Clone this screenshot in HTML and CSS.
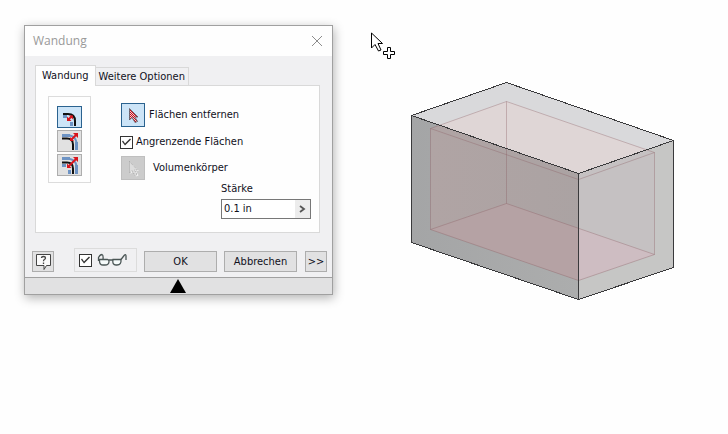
FILE: index.html
```html
<!DOCTYPE html>
<html lang="de">
<head>
<meta charset="utf-8">
<meta name="viewport" content="width=device-width, initial-scale=1">
<title>Wandung</title>
<link rel="stylesheet" href="styles.css">
</head>
<body>
<main class="workspace">
  <section class="dialog" role="dialog" aria-labelledby="dialog-title">
    <header class="titlebar">
      <h1 class="title" id="dialog-title">Wandung</h1>
      <button class="close" type="button" aria-label="Schließen">
        <svg width="12" height="12" viewBox="0 0 12 12"><path d="M1 1l10 10M11 1L1 11" stroke="#8c8c8c" fill="none"/></svg>
      </button>
    </header>
    <form class="body">
      <div class="tabs" role="tablist">
        <button class="tab tab-active" type="button" role="tab" aria-selected="true">Wandung</button>
        <button class="tab" type="button" role="tab" aria-selected="false">Weitere Optionen</button>
      </div>
      <div class="panel" role="tabpanel">
        <div class="modes">
          <button class="mode mode-active" type="button" aria-label="Innen">
            <svg width="23" height="20" viewBox="0 0 23 20" fill="none">
              <path d="M5 9.500h4M13.500 15v4" stroke="#6d93c4" stroke-width="3"/>
              <path d="M5 7h5q7 0 7 7v5" stroke="#111" stroke-width="2"/>
              <path d="M9 14v-4.500l4.500 4.500zM15 8.500v4l-4-4z" fill="#d8141c"/>
              <path d="M10 13l4-4" stroke="#d8141c" stroke-width="2"/>
            </svg>
          </button>
          <button class="mode" type="button" aria-label="Außen">
            <svg width="23" height="20" viewBox="0 0 23 20" fill="none">
              <path d="M4 4.500h8M18.500 11v8" stroke="#6d93c4" stroke-width="3"/>
              <path d="M12 4.500q5.500 1 6.500 7" stroke="#6d93c4" stroke-width="2"/>
              <path d="M4 7.500h5q6 0 6 6v5.500" stroke="#111" stroke-width="2"/>
              <path d="M13 9l5-5" stroke="#d8141c" stroke-width="2"/>
              <path d="M15 2h5v5zM12 6v4h4z" fill="#d8141c"/>
            </svg>
          </button>
          <button class="mode" type="button" aria-label="Beidseitig">
            <svg width="23" height="20" viewBox="0 0 23 20" fill="none">
              <path d="M4 3.500h8M18.500 10v9M4 10.500h4M11.500 15v4" stroke="#6d93c4" stroke-width="3"/>
              <path d="M12 4q5.500 1 6.500 7" stroke="#6d93c4" stroke-width="2"/>
              <path d="M4 7.500h5q6 0 6 6v5.500" stroke="#111" stroke-width="2"/>
              <path d="M11 11l7-7" stroke="#d8141c" stroke-width="2"/>
              <path d="M15 2h5v5zM9 8.500v4.500h4.500z" fill="#d8141c"/>
            </svg>
          </button>
        </div>
        <div class="fields">
          <div class="row">
            <button class="pick pick-active" id="faces" type="button">
              <svg width="22" height="22" viewBox="0 0 22 22">
                <defs><pattern id="dots" width="2" height="2" patternUnits="userSpaceOnUse"><rect width="2" height="2" fill="#f3c9cb"/><path d="M0 0h1v1H0zM1 1h1v1H1z" fill="#c40c18"/></pattern></defs>
                <path d="M7.500 4.500v11.500l2.500-2.500 3 5 2.500-1-2.500-4.500h3z" fill="url(#dots)" stroke="#55555f" stroke-width=".8"/>
              </svg>
            </button>
            <label for="faces">Flächen entfernen</label>
          </div>
          <div class="row row-check">
            <input class="check" id="adjacent" type="checkbox" checked>
            <label for="adjacent">Angrenzende Flächen</label>
          </div>
          <div class="row row-solid">
            <button class="pick pick-disabled" id="solid" type="button" disabled>
              <svg width="22" height="22" viewBox="0 0 22 22">
                <path d="M8.500 5.500v11.500l2.500-2.500 3 5 2.500-1-2.500-4.500h3z" fill="#f2f2f2"/>
                <path d="M7.500 4.500v11.500l2.500-2.500 3 5 2-1-2.500-4.500h3z" fill="#ddd" stroke="#999" stroke-width=".8" stroke-dasharray="1 1"/>
              </svg>
            </button>
            <label for="solid">Volumenkörper</label>
          </div>
          <div class="thickness">
            <label for="thickness">Stärke</label>
            <div class="combo">
              <input class="value" id="thickness" type="text" value="0.1 in">
              <button class="more" type="button" aria-label="Werte">
                <svg width="7" height="8" viewBox="0 0 7 8"><path d="M1 1l4 3-4 3" fill="none" stroke="#555" stroke-width="1.800"/></svg>
              </button>
            </div>
          </div>
        </div>
      </div>
      <div class="actions">
        <button class="btn btn-small" type="button" aria-label="Hilfe">
          <svg width="18" height="18" viewBox="0 0 18 18" fill="none" stroke="#444">
            <path d="M2.500 1.500h14v11h-4l-2.500 4v-4h-7.500z" fill="#fafafa"/>
            <path d="M7.500 5q0-1.500 2-1.500t2 1.500q0 1-1.200 1.500-.8.500-.8 1.700M9.500 9.500v1.500" stroke-width="1.300"/>
          </svg>
        </button>
        <div class="preview">
          <input class="check" id="preview" type="checkbox" checked aria-label="Vorschau">
          <label for="preview">
            <svg width="30" height="14" viewBox="0 0 30 14" fill="none" stroke="#4a5555" stroke-width="1.300">
              <path d="M2.500 6.500h8q1.500 0 1.500 2 0 3.500-4 3.500H6q-3.500 0-3.500-4zM16 6.500h8q.5 5.500-4 5.500h-1q-4 0-3-5.500z" fill="#f6fbfb"/>
              <path d="M12 7h4M1.500 8V4.500Q3 1.500 5 1.500q1.500.5 1 5M24 6.500l3.500-4.500q1.500-1 1.500 1v4"/>
            </svg>
          </label>
        </div>
        <button class="btn btn-wide" type="submit">OK</button>
        <button class="btn btn-wide" type="button">Abbrechen</button>
        <button class="btn btn-small btn-expand" type="button">&gt;&gt;</button>
      </div>
    </form>
    <button class="fold" type="button" aria-label="Einklappen">
      <svg width="16" height="14" viewBox="0 0 16 14"><path d="M8 0l8 14H0z" fill="#000"/></svg>
    </button>
  </section>
  <svg class="scene" viewBox="333 0 395 434" preserveAspectRatio="xMinYMin meet" role="img" aria-label="Quader mit Wandung">
    <defs>
      <clipPath id="top"><path id="top-face" d="M411.500 115.500L506.500 82.500 673.500 140.500 578.500 173.500z"/></clipPath>
      <clipPath id="left"><path id="left-face" d="M411.500 115.500L578.500 173.500V299.500L411.500 242.500z"/></clipPath>
      <clipPath id="right"><path id="right-face" d="M578.500 173.500L673.500 140.500V267.500L578.500 299.500z"/></clipPath>
      <path id="hollow" d="M430.500 128.500L506.500 101.500 654.500 152.500V254.500L578.500 280.500 430.500 229.500z"/>
      <path id="floor" d="M430.500 229.500L506.500 203.500 654.500 254.500 578.500 280.500z"/>
      <linearGradient id="left-shade"><stop offset="0" stop-color="#a4a5a6"/><stop offset="1" stop-color="#acadad"/></linearGradient>
      <linearGradient id="wall-shade"><stop offset="0" stop-color="#b0a4a4"/><stop offset="1" stop-color="#a8a2a2"/></linearGradient>
    </defs>
    <use href="#top-face" fill="#d9d9db"/>
    <use href="#left-face" fill="url(#left-shade)"/>
    <use href="#right-face" fill="#c6c6c5"/>
    <g clip-path="url(#top)"><use href="#hollow" fill="#dfd6d6"/></g>
    <g clip-path="url(#left)"><use href="#hollow" fill="url(#wall-shade)"/><use href="#floor" fill="#b5a2a4"/></g>
    <g clip-path="url(#right)"><use href="#hollow" fill="#c5c1c2"/><use href="#floor" fill="#cebdc2"/></g>
    <path d="M430.500 128.500L506.500 101.500 654.500 152.500 578.500 179.500zM430.500 128.500V229.500M654.500 152.500V254.500M506.500 101.500V203.500M430.500 229.500L506.500 203.500 654.500 254.500 578.500 280.500z" fill="none" stroke="#8a5d62" stroke-opacity=".35"/>
    <path d="M411.500 115.500L506.500 82.500 673.500 140.500V267.500L578.500 299.500 411.500 242.500zL578.500 173.500 673.500 140.500M578.500 173.500V299.500" fill="none" stroke="#3a3a3c" shape-rendering="crispEdges"/>
    <path d="M371.500 33v15l3.500-3.500 3.500 6.500 2.500-1-3-6.500h4.500z" fill="#fff" stroke="#000"/>
    <path d="M387.500 47.500h3v4h4v3h-4v4h-3v-4h-4v-3h4z" fill="#fff" stroke="#000"/>
  </svg>
</main>
</body>
</html>
```
FILE: styles.css
```css
* { box-sizing: border-box; }

body {
  margin: 0;
  min-height: 100vh;
  background: #fefefe;
  color: #10101c;
  font: 11px/14px "DejaVu Sans Condensed", Tahoma, "Noto Sans", sans-serif;
}

button, input { font: inherit; color: inherit; margin: 0; }
button { padding: 0; display: flex; align-items: center; justify-content: center; }
svg { display: block; }

.workspace { display: flex; align-items: flex-start; }

.dialog {
  flex: 0 0 309px;
  margin: 25px 0 0 24px;
  border: 1px solid #a0a0a0;
  background: #f0f0f2;
  box-shadow: 1px 3px 10px rgba(0, 0, 0, 0.3);
}

.titlebar {
  display: flex;
  align-items: center;
  justify-content: space-between;
  height: 30px;
  padding: 0 9px 0 8px;
  background: #fefefe;
}

.title { margin: 0; font: 12px/18px "Open Sans", "Noto Sans", sans-serif; color: #999; }
.close { border: 0; background: none; }

.body { padding: 9px 5px 5px 7px; }

.tabs { display: flex; align-items: flex-end; padding-left: 3px; }

.tab {
  height: 18px;
  padding: 0 3px;
  border: 1px solid #d9d9d9;
  border-width: 1px 1px 0 0;
  background: #f0f0f2;
}

.tab-active {
  position: relative;
  height: 21px;
  margin-bottom: -1px;
  padding: 0 6px;
  border-left-width: 1px;
  background: #fefefe;
}

.panel {
  display: flex;
  align-items: flex-start;
  gap: 30px;
  margin: 0 7px 0 3px;
  padding: 10px 8px 13px 12px;
  border: 1px solid #d9d9d9;
  background: #fefefe;
}

.modes {
  display: flex;
  flex-direction: column;
  gap: 2px;
  padding: 9px 8px 6px;
  border: 1px solid #dcdcdc;
}

.mode { width: 25px; height: 22px; border: 1px solid #adadad; background: #e1e1e1; }
.mode-active { border-color: #2a628f; background: #cce4f7; }

.fields { flex: 1; padding-top: 7px; }
.row { display: flex; align-items: center; gap: 4px; }
.row-check { gap: 3px; padding: 8px 0 7px; margin-left: -1px; }
.row-solid { gap: 8px; }

.pick { width: 24px; height: 24px; border: 1px solid #adadad; background: #e1e1e1; }
.pick-active { border-color: #2a628f; background: #cce4f7; }
.pick-disabled { border-color: #bfbfbf; background: #ccc; }

.check {
  appearance: none;
  flex: none;
  width: 13px;
  height: 13px;
  border: 1px solid #333;
  background: #fff;
}

.check:checked::after {
  content: "";
  display: block;
  height: 11px;
  background: #333;
  clip-path: polygon(1px 5px, 2px 4px, 4px 7px, 9px 2px, 10px 3px, 4px 9px);
}

.thickness {
  display: flex;
  flex-direction: column;
  gap: 3px;
  width: 90px;
  margin: 2px 0 0 auto;
}

.combo { display: flex; height: 20px; border: 1px solid #777; background: #fff; }
.value { flex: 1; min-width: 0; padding: 0 2px; border: 0; background: none; }
.more { width: 15px; border: 0; background: #ececec; }

.actions { display: flex; align-items: flex-end; gap: 7px; padding-top: 15px; }
.btn { height: 21px; border: 1px solid #adadad; background: #e1e1e2; }
.btn-small { width: 22px; }
.btn-wide { flex: 1; }
.btn-expand { margin-left: 1px; }

.preview {
  display: flex;
  align-items: center;
  gap: 5px;
  height: 24px;
  margin-left: 13px;
  padding: 0 9px 0 4px;
  border: 1px solid #dcdcdc;
}

.fold {
  width: 100%;
  height: 17px;
  padding-right: 1px;
  border: 0;
  border-top: 1px solid #a0a0a0;
  background: #e1e1e2;
}

.scene { flex: 1; min-width: 0; }
```
